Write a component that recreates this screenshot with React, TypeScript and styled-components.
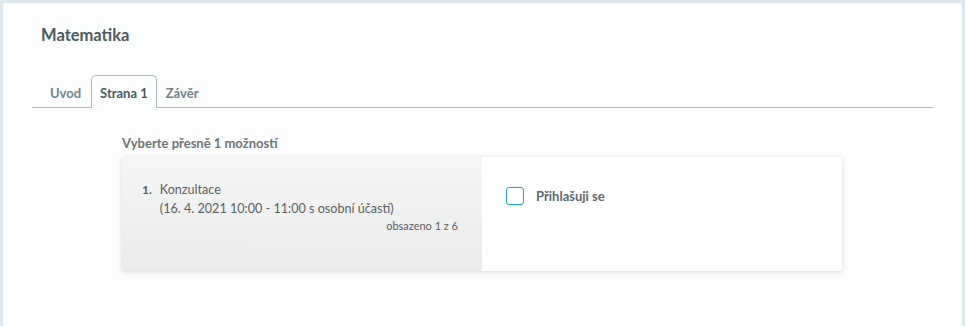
import React from "react";
import styled, { createGlobalStyle } from "styled-components";

const Global = createGlobalStyle`
  html, body { margin: 0; padding: 0; background: #dde7ed; }
  body { font-family: "Lato", "Open Sans", sans-serif; }
  * { box-sizing: border-box; }
`;

const Page = styled.div`
  width: 965px;
  height: 326px;
  padding: 3px 3px 0 3px;
  background: #dde7ed;
`;

const Panel = styled.div`
  width: 959px;
  height: 323px;
  background: #fcfdfd;
  border-radius: 2px 2px 0 0;
  padding: 22px 29px 0 29px;
`;

const Title = styled.h1`
  margin: 0 0 0 9px;
  font-size: 16.5px;
  font-weight: 700;
  color: #4b5961;
  line-height: 20px;
`;

const Tabs = styled.div`
  margin-top: 30px;
  display: flex;
  align-items: flex-end;
  border-bottom: 1px solid #aab4b9;
  height: 33px;
  padding-left: 9px;
`;

const Tab = styled.div<{ $active?: boolean }>`
  height: ${(p) => (p.$active ? "33px" : "32px")};
  padding: 0 ${(p) => (p.$active ? "8px" : "9px")};
  display: flex;
  align-items: center;
  font-size: 13px;
  font-weight: 700;
  color: ${(p) => (p.$active ? "#4b5961" : "#71838c")};
  background: ${(p) => (p.$active ? "#fcfdfd" : "transparent")};
  border: ${(p) => (p.$active ? "1px solid #aab4b9" : "none")};
  border-bottom: ${(p) => (p.$active ? "1px solid #fcfdfd" : "none")};
  border-radius: 5px 5px 0 0;
  margin-bottom: -1px;
  margin-left: ${(p) => (p.$active ? "1px" : "0")};
  padding-top: 2px;
`;

const Content = styled.div`
  padding: 27px 0 0 89px;
`;

const Prompt = styled.div`
  font-size: 13px;
  font-weight: 700;
  color: #6d7478;
  line-height: 16px;
  padding-left: 1px;
`;

const Card = styled.div`
  margin-top: 6px;
  margin-left: 1px;
  width: 720px;
  height: 114px;
  display: grid;
  grid-template-columns: 360px 1fr;
  border-radius: 3px;
  box-shadow: 0 1px 5px rgba(0, 0, 0, 0.16);
  overflow: hidden;
`;

const Left = styled.div`
  background: linear-gradient(#f5f6f6, #e9eaea);
  padding: 23px 24px 0 20px;
  display: flex;
  flex-direction: column;
`;

const Item = styled.div`
  display: flex;
  gap: 8px;
  font-size: 12.6px;
  line-height: 19px;
  color: #5d5f60;
`;

const Num = styled.span`
  font-weight: 700;
  font-size: 12px;
`;

const Occupied = styled.div`
  align-self: flex-end;
  font-size: 11px;
  color: #5d5f60;
  margin-top: 1px;
`;

const Right = styled.div`
  background: #ffffff;
  padding: 30px 24px 0 24px;
`;

const CheckRow = styled.label`
  display: flex;
  align-items: center;
  gap: 12px;
  font-size: 13px;
  font-weight: 700;
  color: #5b676d;
`;

const Box = styled.span`
  width: 18px;
  height: 18px;
  border: 1.5px solid #1e9fd8;
  border-radius: 3px;
  background: #fff;
`;

export default function App() {
  return (
    <>
      <Global />
      <Page>
        <Panel>
          <Title>Matematika</Title>
          <Tabs>
            <Tab>Uvod</Tab>
            <Tab $active>Strana 1</Tab>
            <Tab>Závěr</Tab>
          </Tabs>
          <Content>
            <Prompt>Vyberte přesně 1 možností</Prompt>
            <Card>
              <Left>
                <Item>
                  <Num>1.</Num>
                  <div>
                    Konzultace
                    <br />
                    (16. 4. 2021 10:00 - 11:00 s osobní účastí)
                  </div>
                </Item>
                <Occupied>obsazeno 1 z 6</Occupied>
              </Left>
              <Right>
                <CheckRow>
                  <Box />
                  Přihlašuji se
                </CheckRow>
              </Right>
            </Card>
          </Content>
        </Panel>
      </Page>
    </>
  );
}
